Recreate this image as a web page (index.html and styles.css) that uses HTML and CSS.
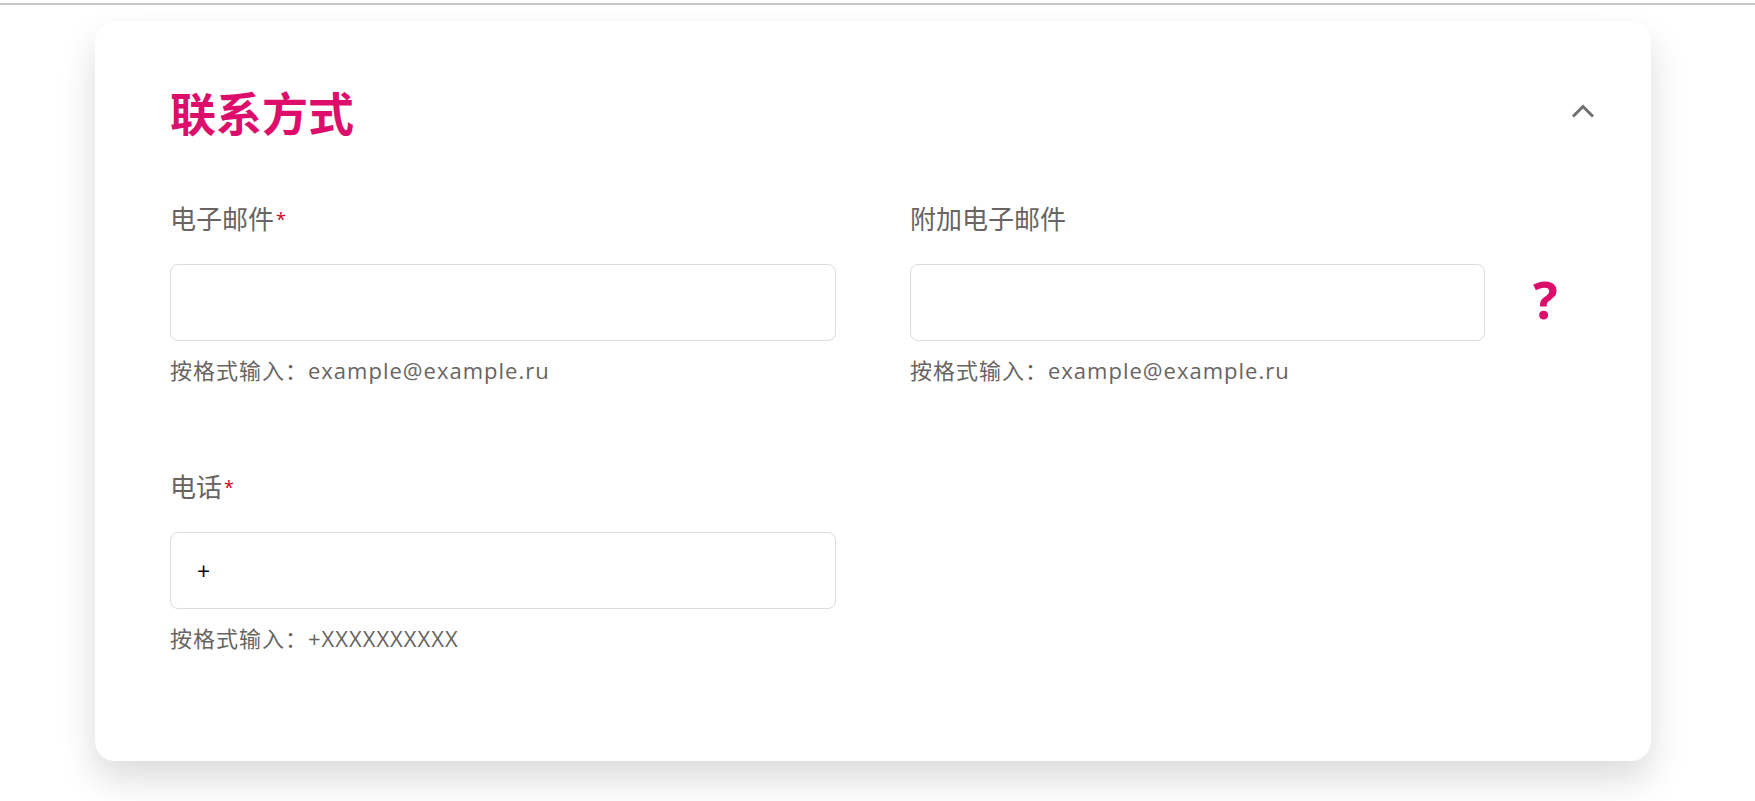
FILE: index.html
```html
<!DOCTYPE html>
<html lang="zh">
<head>
<meta charset="utf-8">
<title>联系方式</title>
<link rel="stylesheet" href="styles.css">
</head>
<body>
<div class="topline"></div>
<section class="card">
  <header class="card-header">
    <h2 class="card-title">联系方式</h2>
    <button class="collapse" type="button" aria-label="收起">
      <svg width="24" height="14" viewBox="0 0 24 14"><polyline points="2,12.5 12,2.5 22,12.5" fill="none" stroke="#707070" stroke-width="3"/></svg>
    </button>
  </header>
  <div class="form-grid">
    <div class="field">
      <label class="field-label">电子邮件<span class="req">*</span></label>
      <div class="field-row">
        <input class="text-input wide" type="text">
      </div>
      <div class="hint">按格式输入：example@example.ru</div>
    </div>
    <div class="field">
      <label class="field-label">附加电子邮件</label>
      <div class="field-row">
        <input class="text-input narrow" type="text">
        <span class="help">?</span>
      </div>
      <div class="hint">按格式输入：example@example.ru</div>
    </div>
    <div class="field">
      <label class="field-label">电话<span class="req">*</span></label>
      <div class="field-row">
        <input class="text-input wide" type="text" value="+">
      </div>
      <div class="hint">按格式输入：+XXXXXXXXXX</div>
    </div>
  </div>
</section>
</body>
</html>
```
FILE: styles.css
```css
html, body {
  margin: 0;
  padding: 0;
  background: #ffffff;
}

body {
  font-family: "Open Sans", "Noto Sans CJK SC", sans-serif;
  color: #6b6b6b;
  padding-bottom: 60px;
}

.topline {
  height: 2px;
  margin-top: 3px;
  background: #c8c8c8;
}

.card {
  box-sizing: border-box;
  width: 1556px;
  margin: 17px 0 0 95px;
  padding: 58px 56px 107px 75px;
  background: #ffffff;
  border-radius: 20px;
  box-shadow: 0 18px 36px rgba(0, 0, 0, 0.14);
}

.card-header {
  display: flex;
  align-items: center;
  justify-content: space-between;
}

.card-title {
  margin: 0;
  font-family: "Noto Sans CJK SC", sans-serif;
  font-size: 46px;
  line-height: 62px;
  font-weight: 700;
  color: #dc0d6b;
}

.collapse {
  display: flex;
  padding: 0;
  border: 0;
  background: none;
}

.form-grid {
  margin-top: 58px;
  display: grid;
  grid-template-columns: 666px auto;
  column-gap: 74px;
  row-gap: 82px;
}

.field {
  display: flex;
  flex-direction: column;
}

.field-label {
  font-family: "Noto Sans CJK SC", sans-serif;
  font-size: 26px;
  line-height: 35px;
  height: 35px;
  color: #676462;
}

.req {
  position: relative;
  top: -3px;
  color: #d0021b;
  font-family: "Open Sans", sans-serif;
  font-size: 18px;
  line-height: 0;
  margin-left: 2px;
}

.field-row {
  margin-top: 29px;
  display: flex;
  align-items: center;
  gap: 48px;
}

.text-input {
  box-sizing: border-box;
  height: 77px;
  padding: 0 26px;
  border: 1px solid #dcdcdc;
  border-radius: 8px;
  background: #ffffff;
  font-family: "Open Sans", sans-serif;
  font-size: 23px;
  font-weight: 500;
  color: #000000;
  outline: none;
}

.wide {
  width: 666px;
}

.narrow {
  width: 575px;
}

.help {
  font-family: "Open Sans", sans-serif;
  font-weight: 700;
  font-size: 52px;
  line-height: 1;
  color: #dc0d6b;
  margin-top: -8px;
}

.hint {
  margin-top: 14px;
  font-size: 22px;
  line-height: 31px;
  letter-spacing: 1px;
  color: #676462;
}
```
